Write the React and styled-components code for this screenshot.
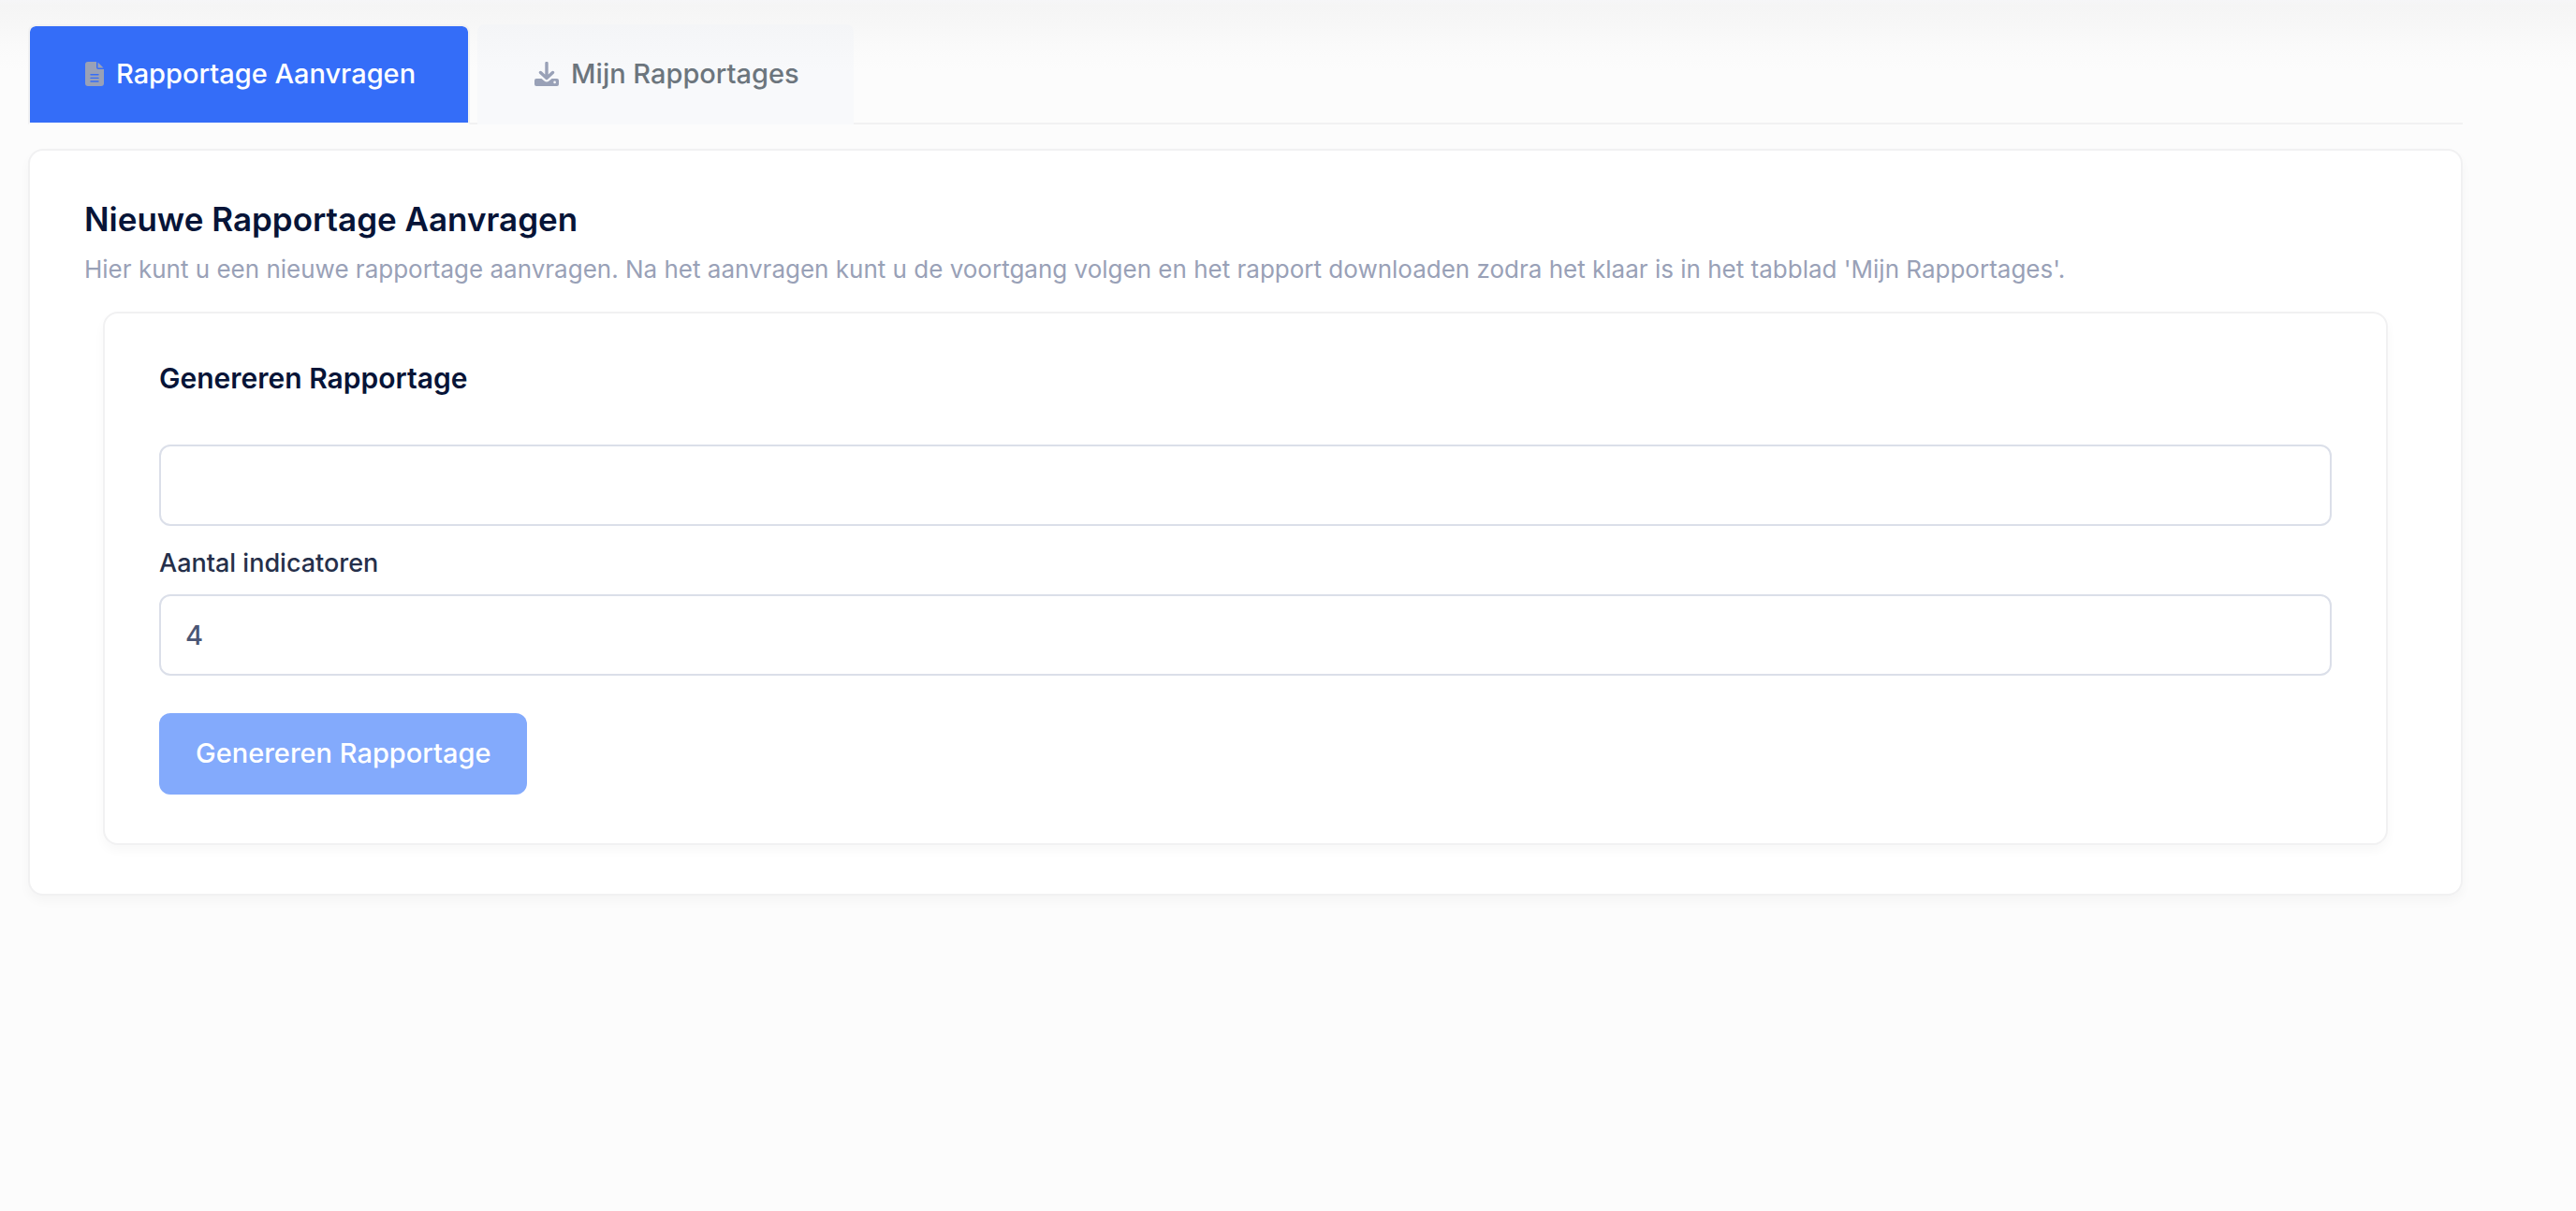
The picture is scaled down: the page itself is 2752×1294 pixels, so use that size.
import React, { useState } from "react";
import styled, { createGlobalStyle } from "styled-components";

const GlobalStyle = createGlobalStyle`
  *, *::before, *::after { box-sizing: border-box; }
  html { background: #fcfcfc; }
  body {
    margin: 0;
    font-family: Inter, "Liberation Sans", sans-serif;
    color: #071437;
    -webkit-font-smoothing: antialiased;
  }
`;

const Page = styled.main`
  min-height: 100vh;
  padding: 26px 121px 40px 30px;
  background: #fcfcfc linear-gradient(#f6f6f8 0, #f5f5f5 6px, #f7f7f7 26px, #fafafa 50px, #fcfcfc 76px) no-repeat top / 100% 76px;
`;

const TabList = styled.div`
  display: flex;
  gap: 8px;
  margin-bottom: 26px;
  box-shadow: inset 0 -2px #f1f1f2;
`;

const Tab = styled.button`
  display: flex;
  align-items: center;
  gap: 13px;
  height: 107px;
  padding: 0 56px 2px 59px;
  border: 2px solid ${(p) => (p.$active ? "#f1f1f2" : "transparent")};
  border-bottom-color: ${(p) => (p.$active ? "#fcfcfc" : "transparent")};
  border-radius: 8px 8px 0 0;
  background: ${(p) => (p.$active ? "#346df8" : "linear-gradient(#f4f5f7, #f8f9fb 50px) border-box")};
  background-clip: ${(p) => (p.$active ? "padding-box" : "border-box")};
  color: ${(p) => (p.$active ? "#ffffff" : "#6c757d")};
  font: 500 29px/42px Inter, "Liberation Sans", sans-serif;
  cursor: pointer;

  svg {
    flex: none;
    color: #99a1b7;
  }
`;

const Card = styled.section`
  padding: ${(p) => (p.$nested ? "46px 58px 52px" : "51px 58px 52px")};
  margin: ${(p) => (p.$nested ? "0 20px" : "0")};
  border: 2px solid #f1f1f2;
  border-radius: 16px;
  background: #ffffff;
  box-shadow: 0 6px 12px rgba(0, 0, 0, 0.03);
`;

const Title = styled.h1`
  margin: 0;
  font-size: 35px;
  font-weight: 600;
  line-height: 44px;
`;

const Description = styled.p`
  margin: 12px 0 25px;
  color: #99a1b7;
  font-size: 26px;
  line-height: 40px;
`;

const Subtitle = styled.h2`
  margin: 0 0 48px;
  font-size: 30px;
  font-weight: 600;
  line-height: 46px;
`;

const Label = styled.label`
  display: block;
  padding: 20px 0 13px;
  color: #252f4a;
  font-size: 27px;
  font-weight: 500;
  line-height: 40px;
`;

const Input = styled.input`
  display: block;
  width: 100%;
  height: 87px;
  padding: 0 26px;
  border: 2px solid #dbdfe9;
  border-radius: 12px;
  outline: none;
  background: #ffffff;
  color: #4b5675;
  font: 500 29px/44px Inter, "Liberation Sans", sans-serif;
`;

const SubmitButton = styled.button`
  display: block;
  height: 87px;
  margin-top: 40px;
  padding: 0 39px 2px;
  border: 0;
  border-radius: 12px;
  background: #83aafc;
  color: #ffffff;
  font: 500 29px/44px Inter, "Liberation Sans", sans-serif;
`;

function ReportIcon() {
  return (
    <svg width="20" height="26" viewBox="0 0 20 26" fill="currentColor" aria-hidden="true">
      <path
        fillRule="evenodd"
        d="M3 0H12V6Q12 8 14 8H20V23Q20 26 17 26H3Q0 26 0 23V3Q0 0 3 0ZM6 13a.7.7 0 0 0 0 1.4h8a.7.7 0 0 0 0-1.4ZM6 16.7a.7.7 0 0 0 0 1.4h8a.7.7 0 0 0 0-1.4ZM6 20.3a.7.7 0 0 0 0 1.4h8a.7.7 0 0 0 0-1.4Z"
      />
      <path d="M13.5 0.5L19.5 6.5H13.5Z" />
    </svg>
  );
}

function DownloadIcon() {
  return (
    <svg width="26" height="26" viewBox="0 0 26 26" aria-hidden="true">
      <path
        d="M13 1.5V17M6.5 11.5L13 17.5L19.5 11.5"
        fill="none"
        stroke="currentColor"
        strokeWidth="3.4"
        strokeLinecap="round"
        strokeLinejoin="round"
      />
      <path
        fill="currentColor"
        fillRule="evenodd"
        d="M2 18H7.5L10.5 20.6Q13 22.4 15.5 20.6L18.5 18H24Q26 18 26 20V24Q26 26 24 26H2Q0 26 0 24V20Q0 18 2 18ZM21.6 20.6a1.3 1.3 0 1 0 0 2.6a1.3 1.3 0 1 0 0-2.6Z"
      />
    </svg>
  );
}

export default function App() {
  const [tab, setTab] = useState("request");
  const [count, setCount] = useState("4");

  return (
    <Page>
      <GlobalStyle />
      <TabList role="tablist">
        <Tab type="button" role="tab" aria-selected={tab === "request"} $active={tab === "request"} onClick={() => setTab("request")}>
          <ReportIcon />
          Rapportage Aanvragen
        </Tab>
        <Tab type="button" role="tab" aria-selected={tab === "mine"} $active={tab === "mine"} onClick={() => setTab("mine")}>
          <DownloadIcon />
          Mijn Rapportages
        </Tab>
      </TabList>
      <Card>
        <Title>Nieuwe Rapportage Aanvragen</Title>
        <Description>
          Hier kunt u een nieuwe rapportage aanvragen. Na het aanvragen kunt u de voortgang volgen en het rapport
          downloaden zodra het klaar is in het tabblad 'Mijn Rapportages'.
        </Description>
        <Card as="form" $nested onSubmit={(e) => e.preventDefault()}>
          <Subtitle id="form-title">Genereren Rapportage</Subtitle>
          <Input type="text" aria-labelledby="form-title" />
          <Label htmlFor="indicator-count">Aantal indicatoren</Label>
          <Input id="indicator-count" type="text" inputMode="numeric" value={count} onChange={(e) => setCount(e.target.value)} />
          <SubmitButton type="submit" disabled>
            Genereren Rapportage
          </SubmitButton>
        </Card>
      </Card>
    </Page>
  );
}
